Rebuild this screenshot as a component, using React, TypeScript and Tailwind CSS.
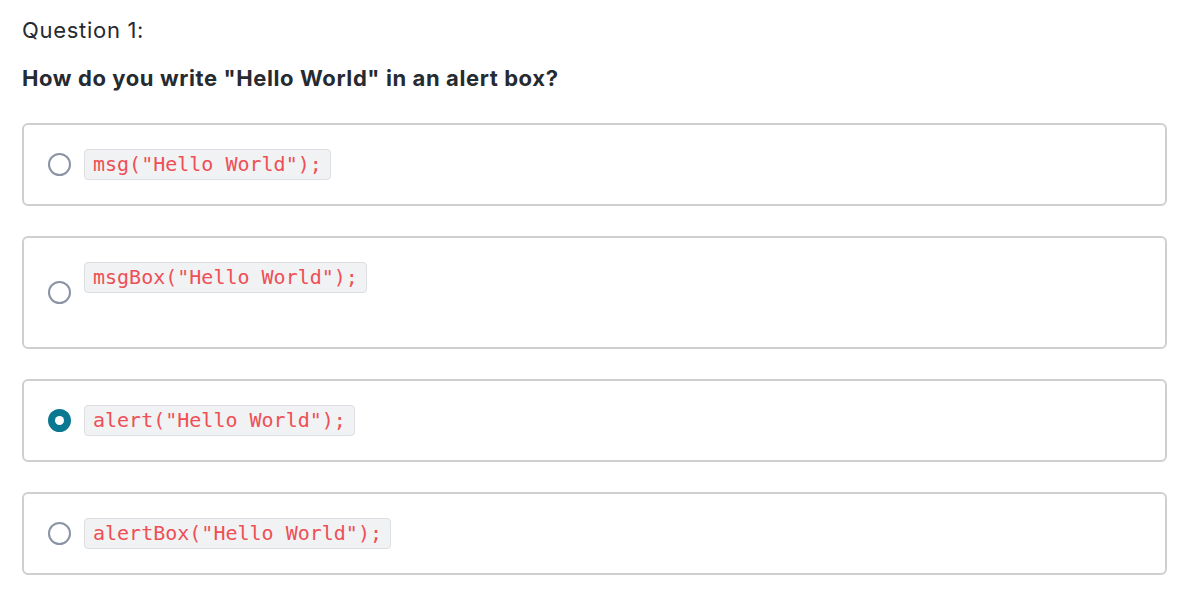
import React from "react";

const options = [
  { code: 'msg("Hello World");', selected: false, extra: false },
  { code: 'msgBox("Hello World");', selected: false, extra: true },
  { code: 'alert("Hello World");', selected: true, extra: false },
  { code: 'alertBox("Hello World");', selected: false, extra: false },
];

function Radio({ selected }: { selected: boolean }) {
  if (selected) {
    return (
      <span className="flex h-[23px] w-[23px] shrink-0 items-center justify-center rounded-full bg-[#0b7891]">
        <span className="h-[9px] w-[9px] rounded-full bg-white" />
      </span>
    );
  }
  return <span className="h-[23px] w-[23px] shrink-0 rounded-full border-2 border-[#8a93a3] bg-white" />;
}

export default function App() {
  return (
    <div className="min-h-[616px] bg-white pl-[22px] pr-[33px] pt-[16px] font-['Inter',sans-serif] text-[#262a31]">
      <p className="text-[22px] leading-[28px] font-normal tracking-[0.7px]">Question 1:</p>
      <p className="mt-[20px] text-[22px] leading-[28px] font-bold tracking-[0.6px]">
        How do you write "Hello World" in an alert box?
      </p>
      <div className="mt-[31px] flex flex-col gap-[30px]">
        {options.map((o) => (
          <label
            key={o.code}
            className="flex items-center gap-[13px] rounded-[6px] border-2 border-[#cfcfcf] bg-white py-[24px] pl-[24px] pr-[24px]"
          >
            <Radio selected={o.selected} />
            <div className="flex flex-col">
              <span className="self-start rounded-[4px] border border-[#dcdee2] bg-[#f1f2f4] px-[8px] py-[2px] font-['DejaVu_Sans_Mono',monospace] text-[20px] leading-[25px] text-[#ee4f55]">
                {o.code}
              </span>
              {o.extra && <span className="h-[30px]" />}
            </div>
          </label>
        ))}
      </div>
    </div>
  );
}
